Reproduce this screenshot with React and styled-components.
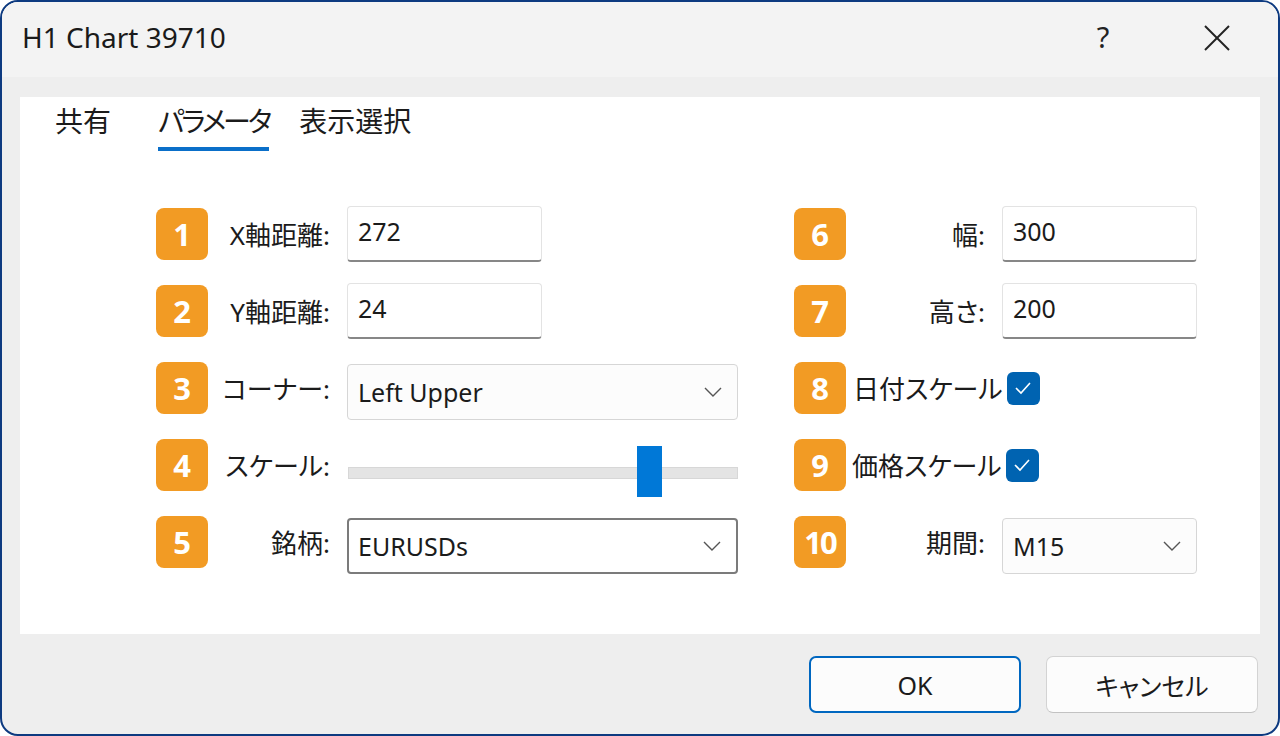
import React from 'react';
import styled, { createGlobalStyle } from 'styled-components';

const GlobalStyle = createGlobalStyle`
    html, body {
        margin:0;
        padding:0;
        background:#ffffff;
    }
    body {
        font-family:"Noto Sans", "Noto Sans CJK JP", sans-serif;
        color:#1b1b1b;
    }
`;

const Window = styled.div`
    width:1280px;
    height:736px;
    box-sizing:border-box;
    border:2px solid #0d3a80;
    border-radius:18px;
    background:#eeeeee;
    overflow:hidden;
    display:flex;
    flex-direction:column;
`;

const TitleBar = styled.div`
    height:75px;
    background:#f3f3f3;
    display:flex;
    align-items:center;
    padding:0 0 0 20px;
`;

const Title = styled.div`
    flex:1;
    font-size:28px;
    color:#1a1a1a;
    padding-bottom:6px;
`;

const TitleButton = styled.div`
    width:${p => p.$w}px;
    height:75px;
    display:flex;
    align-items:center;
    justify-content:center;
    font-size:29px;
    color:#222;
    padding-bottom:${p => p.$pb || 0}px;
    box-sizing:border-box;
`;

const Body = styled.div`
    flex:1;
    padding:20px 18px 0 18px;
    display:flex;
    flex-direction:column;
`;

const Panel = styled.div`
    height:537px;
    background:#ffffff;
    display:flex;
    flex-direction:column;
`;

const Tabs = styled.div`
    display:flex;
    padding:6px 0 0 35px;
    gap:30px;
`;

const Tab = styled.div`
    font-size:28px;
    line-height:36px;
    font-feature-settings:"palt";
    letter-spacing:${p => p.$squeeze || 0}px;
    padding-bottom:8px;
    margin-right:${p => p.$extra || 0}px;
    border-bottom:4px solid ${p => p.$active ? '#0a6fc9' : 'transparent'};
`;

const Form = styled.div`
    display:flex;
    padding:57px 0 0 136px;
`;

const Column = styled.div`
    width:${p => p.$w ? p.$w + 'px' : 'auto'};
    display:flex;
    flex-direction:column;
    gap:25px;
`;

const Row = styled.div`
    height:52px;
    display:flex;
    align-items:center;
`;

const Badge = styled.div`
    width:52px;
    height:52px;
    flex:none;
    border-radius:8px;
    background:#f29b24;
    color:#fff;
    font-weight:700;
    font-size:31px;
    letter-spacing:${p => p.$tight ? '-2px' : '0'};
    display:flex;
    align-items:center;
    justify-content:center;
`;

const Label = styled.div`
    width:${p => p.$w ? p.$w + 'px' : 'auto'};
    margin-left:${p => p.$ml}px;
    text-align:${p => p.$align || 'right'};
    font-size:26px;
    font-feature-settings:"palt";
    white-space:nowrap;
    color:#1b1b1b;
`;

const TextInput = styled.div`
    box-sizing:border-box;
    width:195px;
    height:56px;
    margin-left:17px;
    border:1px solid #e3e3e3;
    border-bottom:2px solid #878787;
    border-radius:4px;
    background:#fff;
    font-size:25px;
    padding:0 0 5px 10px;
    display:flex;
    align-items:center;
`;

const Combo = styled.div`
    box-sizing:border-box;
    width:${p => p.$w}px;
    height:56px;
    margin:8px 0 0 17px;
    border:${p => p.$focus ? '2px solid #7b7b7b' : '1px solid #d6d6d6'};
    border-radius:4px;
    background:${p => p.$focus ? '#ffffff' : '#fcfcfc'};
    font-size:25px;
    padding:0 15px 0 ${p => p.$focus ? 9 : 10}px;
    display:flex;
    align-items:center;
    justify-content:space-between;
`;

const SliderWrap = styled.div`
    position:relative;
    width:390px;
    height:52px;
    margin-left:18px;
`;

const Track = styled.div`
    box-sizing:border-box;
    margin-top:28px;
    height:12px;
    background:#e4e4e4;
    border:1px solid #d7d7d7;
`;

const Thumb = styled.div`
    position:absolute;
    top:7px;
    width:25px;
    height:51px;
    background:#0078d7;
`;

const Check = styled.div`
    width:33px;
    height:33px;
    margin-left:${p => p.$ml || 6}px;
    border-radius:6px;
    background:#0063b1;
    display:flex;
    align-items:center;
    justify-content:center;
`;

const ButtonBar = styled.div`
    display:flex;
    justify-content:flex-end;
    gap:25px;
    padding:22px 2px 0 0;
`;

const Button = styled.div`
    box-sizing:border-box;
    width:212px;
    height:57px;
    border-radius:7px;
    background:#fcfcfc;
    border:${p => p.$primary ? '2px solid #0067c0' : '1px solid #d3d3d3'};
    border-bottom-color:${p => p.$primary ? '#0067c0' : '#c2c2c2'};
    font-size:25px;
    font-feature-settings:"palt";
    display:flex;
    align-items:center;
    justify-content:center;
`;

const Chevron = () => (
    <svg width="18" height="10" viewBox="0 0 18 10">
        <polyline points="1,1 9,9 17,1" fill="none" stroke="#555" strokeWidth="1.4" />
    </svg>
);

const CheckMark = () => (
    <svg width="18" height="14" viewBox="0 0 18 14">
        <polyline points="2,7 7,12 16,2" fill="none" stroke="#fff" strokeWidth="1.6" />
    </svg>
);

const CloseIcon = () => (
    <svg width="28" height="28" viewBox="0 0 28 28">
        <line x1="2" y1="2" x2="26" y2="26" stroke="#222" strokeWidth="2" />
        <line x1="26" y1="2" x2="2" y2="26" stroke="#222" strokeWidth="2" />
    </svg>
);

const App = () => {
    return <>
        <GlobalStyle />
        <Window>
            <TitleBar>
                <Title>H1 Chart 39710</Title>
                <TitleButton $w={70} $pb={6}>?</TitleButton>
                <TitleButton $w={44} />
                <TitleButton $w={70} $pb={4}><CloseIcon /></TitleButton>
                <TitleButton $w={26} />
            </TitleBar>
            <Body>
                <Panel>
                    <Tabs>
                        <Tab $extra={17}>共有</Tab>
                        <Tab $active $squeeze={-3}>パラメータ</Tab>
                        <Tab>表示選択</Tab>
                    </Tabs>
                    <Form>
                        <Column $w={638}>
                            <Row>
                                <Badge>1</Badge>
                                <Label $w={114} $ml={8}>X軸距離:</Label>
                                <TextInput>272</TextInput>
                            </Row>
                            <Row>
                                <Badge>2</Badge>
                                <Label $w={114} $ml={8}>Y軸距離:</Label>
                                <TextInput>24</TextInput>
                            </Row>
                            <Row>
                                <Badge>3</Badge>
                                <Label $w={114} $ml={8}>コーナー:</Label>
                                <Combo $w={391}>Left Upper<Chevron /></Combo>
                            </Row>
                            <Row>
                                <Badge>4</Badge>
                                <Label $w={114} $ml={8}>スケール:</Label>
                                <SliderWrap>
                                    <Track />
                                    <Thumb style={{ left: 289 }} />
                                </SliderWrap>
                            </Row>
                            <Row>
                                <Badge>5</Badge>
                                <Label $w={114} $ml={8}>銘柄:</Label>
                                <Combo $w={391} $focus>EURUSDs<Chevron /></Combo>
                            </Row>
                        </Column>
                        <Column>
                            <Row>
                                <Badge>6</Badge>
                                <Label $w={130} $ml={9}>幅:</Label>
                                <TextInput>300</TextInput>
                            </Row>
                            <Row>
                                <Badge>7</Badge>
                                <Label $w={130} $ml={9}>高さ:</Label>
                                <TextInput>200</TextInput>
                            </Row>
                            <Row>
                                <Badge>8</Badge>
                                <Label $ml={7} $align="left">日付スケール</Label>
                                <Check $ml={4}><CheckMark /></Check>
                            </Row>
                            <Row>
                                <Badge>9</Badge>
                                <Label $ml={6} $align="left">価格スケール</Label>
                                <Check $ml={4}><CheckMark /></Check>
                            </Row>
                            <Row>
                                <Badge $tight>10</Badge>
                                <Label $w={130} $ml={9}>期間:</Label>
                                <Combo $w={195}>M15<Chevron /></Combo>
                            </Row>
                        </Column>
                    </Form>
                </Panel>
                <ButtonBar>
                    <Button $primary>OK</Button>
                    <Button>キャンセル</Button>
                </ButtonBar>
            </Body>
        </Window>
    </>
}

export default App;
